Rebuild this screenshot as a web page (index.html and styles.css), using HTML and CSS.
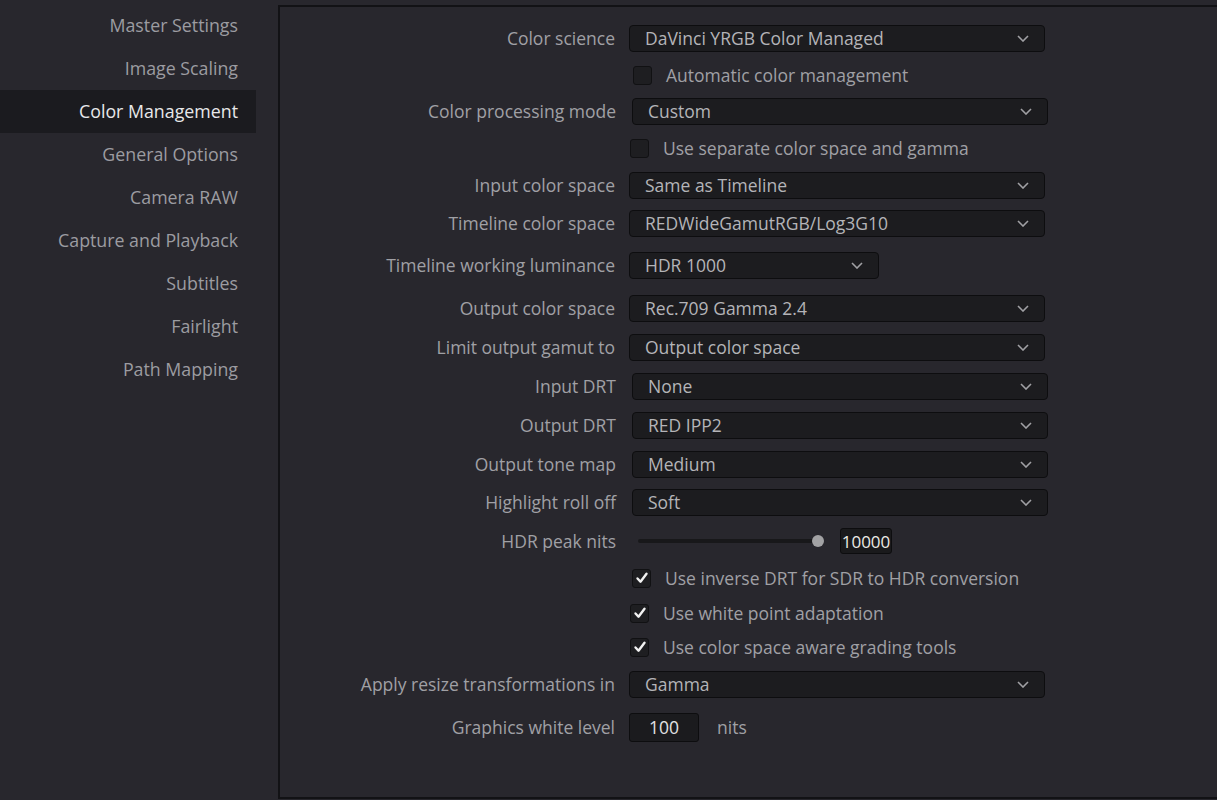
FILE: index.html
```html
<!DOCTYPE html>
<html>
<head>
<meta charset="utf-8">
<link rel="stylesheet" href="styles.css">
</head>
<body>
<div class="app">
  <nav class="sidebar">
    <div class="nav-item">Master Settings</div>
    <div class="nav-item">Image Scaling</div>
    <div class="nav-item active">Color Management</div>
    <div class="nav-item">General Options</div>
    <div class="nav-item">Camera RAW</div>
    <div class="nav-item">Capture and Playback</div>
    <div class="nav-item">Subtitles</div>
    <div class="nav-item">Fairlight</div>
    <div class="nav-item">Path Mapping</div>
  </nav>
  <main class="panel">
    <div class="row">
      <div class="label">Color science</div>
      <div class="select"><span>DaVinci YRGB Color Managed</span><svg class="chev" viewBox="0 0 12 7"><path d="M1 1l5 5 5-5"/></svg></div>
    </div>
    <div class="row mt9">
      <div class="label"></div>
      <label class="check sx4"><span class="box"></span><span class="ctext">Automatic color management</span></label>
    </div>
    <div class="row mt8 shift">
      <div class="label">Color processing mode</div>
      <div class="select"><span>Custom</span><svg class="chev" viewBox="0 0 12 7"><path d="M1 1l5 5 5-5"/></svg></div>
    </div>
    <div class="row mt9">
      <div class="label"></div>
      <label class="check sx1"><span class="box"></span><span class="ctext">Use separate color space and gamma</span></label>
    </div>
    <div class="row mt9">
      <div class="label">Input color space</div>
      <div class="select"><span>Same as Timeline</span><svg class="chev" viewBox="0 0 12 7"><path d="M1 1l5 5 5-5"/></svg></div>
    </div>
    <div class="row mt10">
      <div class="label">Timeline color space</div>
      <div class="select"><span>REDWideGamutRGB/Log3G10</span><svg class="chev" viewBox="0 0 12 7"><path d="M1 1l5 5 5-5"/></svg></div>
    </div>
    <div class="row mt14">
      <div class="label">Timeline working luminance</div>
      <div class="select short"><span>HDR 1000</span><svg class="chev" viewBox="0 0 12 7"><path d="M1 1l5 5 5-5"/></svg></div>
    </div>
    <div class="row mt15">
      <div class="label">Output color space</div>
      <div class="select"><span>Rec.709 Gamma 2.4</span><svg class="chev" viewBox="0 0 12 7"><path d="M1 1l5 5 5-5"/></svg></div>
    </div>
    <div class="row mt11">
      <div class="label">Limit output gamut to</div>
      <div class="select"><span>Output color space</span><svg class="chev" viewBox="0 0 12 7"><path d="M1 1l5 5 5-5"/></svg></div>
    </div>
    <div class="row mt11 shift">
      <div class="label">Input DRT</div>
      <div class="select"><span>None</span><svg class="chev" viewBox="0 0 12 7"><path d="M1 1l5 5 5-5"/></svg></div>
    </div>
    <div class="row mt11 shift">
      <div class="label">Output DRT</div>
      <div class="select"><span>RED IPP2</span><svg class="chev" viewBox="0 0 12 7"><path d="M1 1l5 5 5-5"/></svg></div>
    </div>
    <div class="row mt11 shift">
      <div class="label">Output tone map</div>
      <div class="select"><span>Medium</span><svg class="chev" viewBox="0 0 12 7"><path d="M1 1l5 5 5-5"/></svg></div>
    </div>
    <div class="row mt10 shift">
      <div class="label">Highlight roll off</div>
      <div class="select"><span>Soft</span><svg class="chev" viewBox="0 0 12 7"><path d="M1 1l5 5 5-5"/></svg></div>
    </div>
    <div class="row mt11 shift">
      <div class="label">HDR peak nits</div>
      <div class="slider"><div class="track"></div><div class="knob"></div></div>
      <div class="num-box">10000</div>
    </div>
    <div class="row mt9">
      <div class="label"></div>
      <label class="check sx3"><span class="box on"><svg viewBox="0 0 14 14"><path d="M2.5 7.5l3 3.2 6-8"/></svg></span><span class="ctext">Use inverse DRT for SDR to HDR conversion</span></label>
    </div>
    <div class="row mt7">
      <div class="label"></div>
      <label class="check sx1"><span class="box on"><svg viewBox="0 0 14 14"><path d="M2.5 7.5l3 3.2 6-8"/></svg></span><span class="ctext">Use white point adaptation</span></label>
    </div>
    <div class="row mt6">
      <div class="label"></div>
      <label class="check sx1"><span class="box on"><svg viewBox="0 0 14 14"><path d="M2.5 7.5l3 3.2 6-8"/></svg></span><span class="ctext">Use color space aware grading tools</span></label>
    </div>
    <div class="row mt9">
      <div class="label">Apply resize transformations in</div>
      <div class="select"><span>Gamma</span><svg class="chev" viewBox="0 0 12 7"><path d="M1 1l5 5 5-5"/></svg></div>
    </div>
    <div class="row mt15">
      <div class="label">Graphics white level</div>
      <div class="value-box">100</div>
      <div class="unit">nits</div>
    </div>
  </main>
</div>
</body>
</html>
```

FILE: styles.css
```css
html, body {
  margin: 0;
  padding: 0;
}
body {
  width: 1217px;
  height: 800px;
  overflow: hidden;
  background: #28272d;
  font-family: "Open Sans", "Noto Sans", sans-serif;
  font-size: 17.8px;
  color: #a0a0a5;
}
.app {
  display: flex;
  height: 800px;
}
.sidebar {
  width: 256px;
  flex: none;
  padding-top: 4px;
}
.nav-item {
  height: 43px;
  line-height: 43px;
  text-align: right;
  padding-right: 18px;
  color: #9c9ca1;
  white-space: nowrap;
}
.nav-item.active {
  background: #1b1b1f;
  color: #e8e8ea;
}
.panel {
  flex: 1;
  min-width: 0;
  margin-left: 22px;
  margin-top: 5px;
  height: 794px;
  box-sizing: border-box;
  background: #28272d;
  border: 2px solid #121215;
  border-right: none;
  display: flex;
  flex-direction: column;
  padding-top: 17px;
  overflow: hidden;
  font-size: 17.5px;
}
.row {
  display: flex;
  align-items: center;
  height: 28px;
  flex: none;
}
.row.shift {
  padding-left: 3px;
}
.mt6 { margin-top: 6px; }
.mt7 { margin-top: 7px; }
.mt8 { margin-top: 8px; }
.mt9 { margin-top: 9px; }
.mt10 { margin-top: 10px; }
.mt11 { margin-top: 11px; }
.mt14 { margin-top: 14px; }
.mt15 { margin-top: 15px; }
.label {
  width: 335px;
  flex: none;
  text-align: right;
  margin-right: 14px;
  white-space: nowrap;
  color: #a0a0a5;
}
.row.shift .label {
  width: 333px;
}
.select {
  width: 416px;
  height: 27px;
  flex: none;
  box-sizing: border-box;
  background: #1c1c1f;
  border: 1px solid #0d0d0f;
  border-radius: 4px;
  display: flex;
  align-items: center;
  justify-content: space-between;
  padding: 0 15px 0 15px;
  color: #b4b4b8;
  white-space: nowrap;
}
.row.shift .select {
  margin-left: 2px;
}
.select.short {
  width: 250px;
}
.chev {
  width: 12px;
  height: 7px;
  fill: none;
  stroke: #a0a0a4;
  stroke-width: 1.6;
}
.check {
  display: flex;
  align-items: center;
  white-space: nowrap;
}
.sx1 { margin-left: 1px; }
.sx3 { margin-left: 3px; }
.sx4 { margin-left: 4px; }
.box {
  width: 19px;
  height: 19px;
  flex: none;
  box-sizing: border-box;
  background: #1e1e21;
  border: 1px solid #111113;
  border-radius: 3px;
  display: flex;
  align-items: center;
  justify-content: center;
  margin-right: 14px;
}
.box svg {
  width: 14px;
  height: 14px;
  fill: none;
  stroke: #f2f2f2;
  stroke-width: 2.4;
  stroke-linecap: round;
  stroke-linejoin: round;
}
.ctext {
  color: #a0a0a5;
}
.slider {
  position: relative;
  width: 195px;
  height: 14px;
  flex: none;
  margin-left: 8px;
  margin-right: 7px;
}
.track {
  position: absolute;
  left: 0;
  top: 5px;
  width: 186px;
  height: 4px;
  border-radius: 2px;
  background: #18181a;
}
.knob {
  position: absolute;
  left: 174px;
  top: 1px;
  width: 12px;
  height: 12px;
  border-radius: 50%;
  background: #a2a2a4;
}
.num-box {
  width: 52px;
  height: 26px;
  flex: none;
  box-sizing: border-box;
  background: #1a1a1c;
  border: 1px solid #0d0d0f;
  border-radius: 3px;
  color: #ecebe4;
  display: flex;
  align-items: center;
  justify-content: center;
  font-size: 17px;
}
.value-box {
  width: 70px;
  height: 29px;
  flex: none;
  box-sizing: border-box;
  background: #1b1b1e;
  border: 1px solid #0d0d0f;
  border-radius: 3px;
  color: #e2e2e4;
  display: flex;
  align-items: center;
  justify-content: center;
}
.unit {
  margin-left: 18px;
  color: #a0a0a5;
}
```
